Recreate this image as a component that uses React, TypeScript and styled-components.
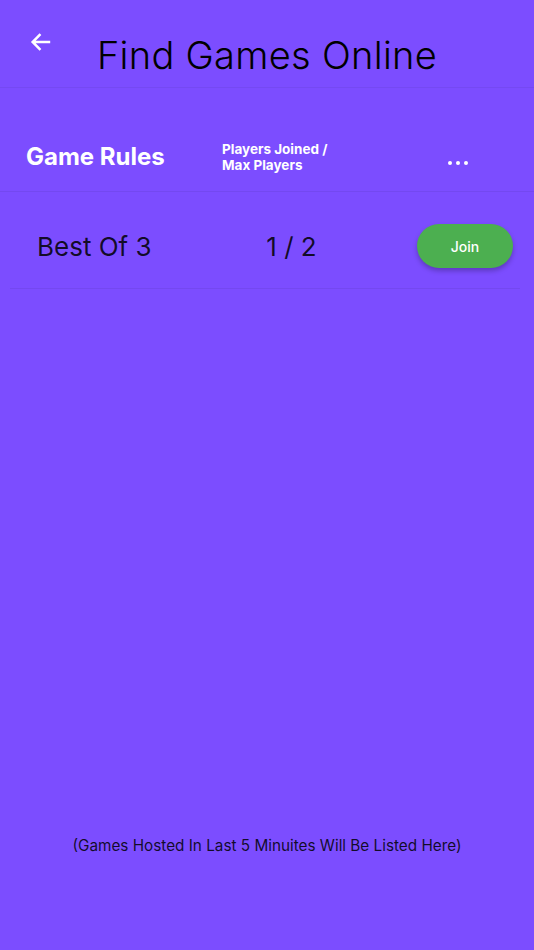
import styled, { createGlobalStyle } from 'styled-components';

const GlobalStyle = createGlobalStyle`
  html, body {
    margin: 0;
    padding: 0;
    background: #7c4dff;
  }
  * {
    box-sizing: border-box;
  }
`;

interface Game {
  id: number;
  rules: string;
  joined: number;
  max: number;
}

const games: Game[] = [{ id: 1, rules: 'Best Of 3', joined: 1, max: 2 }];

const Page = styled.div`
  display: flex;
  flex-direction: column;
  min-height: 100vh;
  background: #7c4dff;
  font-family: Inter, 'Noto Sans', sans-serif;
`;

const AppBar = styled.header`
  position: relative;
  display: flex;
  align-items: center;
  justify-content: center;
  height: 88px;
  padding-top: 22px;
  border-bottom: 1px solid rgba(0, 0, 0, 0.05);
`;

const BackButton = styled.button`
  position: absolute;
  left: 24px;
  top: 25px;
  display: flex;
  align-items: center;
  justify-content: center;
  width: 34px;
  height: 34px;
  padding: 0;
  border: none;
  background: none;
  color: #fff;
  cursor: pointer;
`;

const Title = styled.h1`
  margin: 0;
  font-size: 38px;
  font-weight: 300;
  color: #000;
  letter-spacing: 0.3px;
`;

const Row = styled.div<{ $header?: boolean }>`
  display: grid;
  grid-template-columns: 196px 1fr 96px;
  align-items: center;
  height: ${({ $header }) => ($header ? '104px' : '97px')};
  margin: ${({ $header }) => ($header ? '0' : '0 14px 0 10px')};
  padding: ${({ $header }) => ($header ? '34px 66px 0 26px' : '12px 7px 0 27px')};
  border-bottom: 1px solid rgba(0, 0, 0, 0.06);
`;

const HeadLabel = styled.span<{ $small?: boolean }>`
  color: #fff;
  font-weight: 700;
  font-size: ${({ $small }) => ($small ? '13.5px' : '24px')};
  line-height: ${({ $small }) => ($small ? '16px' : '28px')};
`;

const MoreDots = styled.span`
  justify-self: end;
  display: flex;
  gap: 4px;
  margin-top: 12px;

  i {
    display: block;
    width: 4px;
    height: 4px;
    border-radius: 50%;
    background: #fff;
  }
`;

const Cell = styled.span<{ $center?: boolean }>`
  font-size: 26px;
  font-weight: 400;
  color: rgba(0, 0, 0, 0.85);
  text-align: ${({ $center }) => ($center ? 'center' : 'left')};
  padding-right: ${({ $center }) => ($center ? '67px' : '0')};
`;

const JoinButton = styled.button`
  width: 96px;
  height: 44px;
  border: none;
  border-radius: 22px;
  background: #4caf50;
  color: #fff;
  font-family: inherit;
  font-size: 14px;
  font-weight: 500;
  box-shadow: 0 3px 5px rgba(0, 0, 0, 0.25);
  cursor: pointer;
`;

const Spacer = styled.div`
  flex: 1;
`;

const Footer = styled.p`
  margin: 0;
  padding-bottom: 95px;
  text-align: center;
  font-size: 15.3px;
  color: rgba(0, 0, 0, 0.85);
`;

const App = () => {
  return (
    <Page>
      <GlobalStyle />
      <AppBar>
        <BackButton aria-label="Back">
          <svg width="26" height="26" viewBox="0 0 24 24" fill="none">
            <path
              d="M20.5 12H4.5M11.5 4.8L4.3 12l7.2 7.2"
              stroke="currentColor"
              strokeWidth="2.3"
            />
          </svg>
        </BackButton>
        <Title>Find Games Online</Title>
      </AppBar>

      <Row $header>
        <HeadLabel>Game Rules</HeadLabel>
        <HeadLabel $small>
          Players Joined /<br />
          Max Players
        </HeadLabel>
        <MoreDots>
          <i />
          <i />
          <i />
        </MoreDots>
      </Row>

      {games.map((game) => (
        <Row key={game.id}>
          <Cell>{game.rules}</Cell>
          <Cell $center>
            {game.joined} / {game.max}
          </Cell>
          <JoinButton>Join</JoinButton>
        </Row>
      ))}

      <Spacer />
      <Footer>(Games Hosted In Last 5 Minuites Will Be Listed Here)</Footer>
    </Page>
  );
};

export default App;
